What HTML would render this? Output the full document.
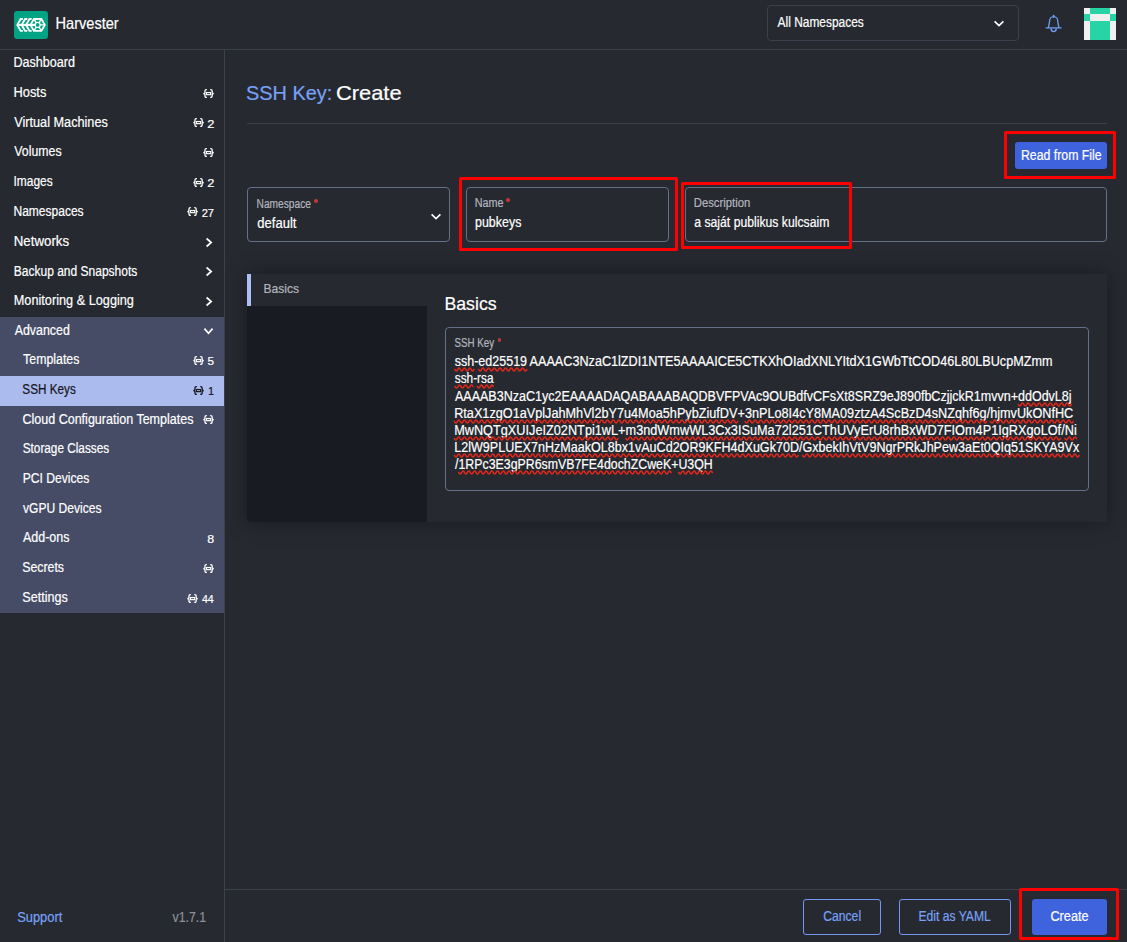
<!DOCTYPE html>
<html lang="en">
<head>
<meta charset="utf-8">
<title>Harvester - SSH Key: Create</title>
<style>
*{box-sizing:border-box;margin:0;padding:0}
html,body{width:1127px;height:942px;overflow:hidden;background:#262930;}
body{font-family:"Liberation Sans",sans-serif;font-size:14px;color:#fff;position:relative;-webkit-font-smoothing:antialiased}
.abs{position:absolute}
.t{position:absolute;white-space:nowrap;line-height:1;transform-origin:0 50%;-webkit-text-stroke:0.2px}
/* header */
#hdr{position:absolute;left:0;top:0;width:1127px;height:50px;border-bottom:1px solid #3c404a;background:#262930}
#logo{position:absolute;left:14px;top:11px;width:34px;height:28px}
#nssel{position:absolute;left:767px;top:5px;width:252px;height:36px;border:1px solid #3b404c;border-radius:4px}
#avatar{position:absolute;left:1084px;top:8px;width:32px;height:32px}
/* sidebar */
#side{position:absolute;left:0;top:50px;width:225px;height:892px;border-right:1px solid #3c404a}
#grp{position:absolute;left:0;top:317px;width:224px;height:296px;background:#464c66}
#act{position:absolute;left:0;top:376px;width:224px;height:30px;background:#abbbee}
.nv{font-size:14px}
.ct{font-size:11.5px}
/* main */
.field{position:absolute;border:1px solid #647088;border-radius:4px;background:#262930}
.lbl{font-size:12px;color:#b4b6bf}
.ast{position:absolute;width:3.6px;height:3.4px;border-radius:50%;background:#bb3a36}
.red{position:absolute;border:3px solid #ff0000;border-radius:1.5px}
.btn{position:absolute;border-radius:3px;font-size:14px}
.hr{position:absolute;height:1px;background:#3c404a}
.k{left:454px;font-size:14px;color:#fff}
.k u{text-decoration:none}
</style>
</head>
<body>

<!-- ===== HEADER ===== -->
<div id="hdr">
  <svg id="logo" viewBox="0 0 34 28">
    <rect x="0" y="0" width="34" height="28" rx="3.2" fill="#00a383"/>
    <g fill="none" stroke="#fff" stroke-width="1.9" stroke-linejoin="miter" stroke-miterlimit="6">
      <path d="M8.9 7.95 H6.7 L3.3 13.9 L6.7 19.85 H8.9"/>
      <path d="M13.3 7.95 H11.1 L7.7 13.9 L11.1 19.85 H13.3"/>
      <path d="M17.7 7.95 H15.5 L12.1 13.9 L15.5 19.85 H17.7"/>
      <path d="M19.9 7.95 H27.4 L30.8 13.9 L27.4 19.85 H19.9 L16.5 13.9 Z"/>
      <path d="M3 13.9 H21" stroke-width="2.1"/>
    </g>
    <g fill="none" stroke="#fff" stroke-width="1.4">
      <path d="M19.9 8 L27.4 19.8 M27.4 8 L19.9 19.8 M16.5 13.9 H30.8"/>
    </g>
    <circle cx="23.65" cy="13.9" r="3.1" fill="#fff"/>
    <circle cx="23.65" cy="13.9" r="1.85" fill="#00a383"/>
  </svg>
  <span class="t" id="t-harv" style="left:55px;top:15px;font-size:16.5px;transform:translateX(0.49px) scaleX(0.8836)">Harvester</span>

  <div id="nssel"></div>
  <span class="t" id="t-allns" style="left:777px;top:15px;font-size:14px;transform:translateX(0.59px) scaleX(0.8520)">All Namespaces</span>
  <svg class="abs" style="left:992.6px;top:19.2px" width="12" height="9" viewBox="0 0 12 9"><path d="M1.6 2.4 L6 6.5 L10.4 2.4" fill="none" stroke="#fff" stroke-width="1.7"/></svg>

  <svg class="abs" style="left:1044px;top:14px" width="20" height="20" viewBox="0 0 20 20">
    <path d="M2.2 13.95 H17.1" fill="none" stroke="#6e9df3" stroke-width="1.3" stroke-linecap="round"/>
    <path d="M4.5 13.8 C4.5 11.4 5.5 9.6 5.5 7.2 A4.15 4.6 0 0 1 13.8 7.2 C13.8 9.6 14.8 11.4 14.8 13.8" fill="none" stroke="#6e9df3" stroke-width="1.3"/>
    <path d="M7 14.2 A2.65 3.4 0 0 0 12.3 14.2" fill="none" stroke="#6e9df3" stroke-width="1.3"/>
    <path d="M9.65 1.5 V3" stroke="#6e9df3" stroke-width="1.7" stroke-linecap="round"/>
  </svg>

  <svg id="avatar" viewBox="0 0 5 5" shape-rendering="crispEdges">
    <rect width="5" height="5" fill="#f0f0f0"/>
    <rect x="1" y="0" width="3" height="1" fill="#26d4a5"/>
    <rect x="0" y="1" width="1" height="1" fill="#26d4a5"/>
    <rect x="4" y="1" width="1" height="1" fill="#26d4a5"/>
    <rect x="1" y="2" width="3" height="3" fill="#26d4a5"/>
  </svg>
</div>

<!-- ===== SIDEBAR ===== -->
<svg width="0" height="0" style="position:absolute">
  <defs>
    <g id="nsico" fill="none" stroke="currentColor">
      <path d="M3.9 0.65 H3.3 Q1.95 0.65 1.95 2 V3.6 Q1.95 4.55 0.3 4.55 Q1.95 4.55 1.95 5.5 V7.1 Q1.95 8.45 3.3 8.45 H3.9" stroke-width="1.3"/>
      <path d="M7.2 0.65 H7.8 Q9.15 0.65 9.15 2 V3.6 Q9.15 4.55 10.8 4.55 Q9.15 4.55 9.15 5.5 V7.1 Q9.15 8.45 7.8 8.45 H7.2" stroke-width="1.3"/>
      <rect x="3.4" y="3.55" width="4.3" height="2.1" stroke-width="1.2"/>
    </g>
  </defs>
</svg>
<div id="side"></div>
<div id="grp"></div>
<div id="act"></div>
<!--NAV-->
<span class="t nv" id="n0" style="left:13px;top:55px;color:#fff;transform:translateX(0.47px) scaleX(0.8989)">Dashboard</span>
<span class="t nv" id="n1" style="left:13px;top:85px;color:#fff;transform:translateX(0.44px) scaleX(0.9189)">Hosts</span>
<svg class="abs ic" style="left:203.2px;top:88.9px;color:#fff" width="11.1" height="9.1" viewBox="0 0 11.1 9.1"><use href="#nsico"/></svg>
<span class="t nv" id="n2" style="left:14px;top:115px;color:#fff;transform:translateX(0.26px) scaleX(0.9061)">Virtual Machines</span>
<span class="t ct" id="c2" style="left:207px;top:119px;color:#fff;transform:translateX(0.37px) scaleX(1.1176)">2</span>
<svg class="abs ic" style="left:193.2px;top:117.9px;color:#fff" width="11.1" height="9.1" viewBox="0 0 11.1 9.1"><use href="#nsico"/></svg>
<span class="t nv" id="n3" style="left:14px;top:144px;color:#fff;transform:translateX(0.28px) scaleX(0.8808)">Volumes</span>
<svg class="abs ic" style="left:203.2px;top:147.9px;color:#fff" width="11.1" height="9.1" viewBox="0 0 11.1 9.1"><use href="#nsico"/></svg>
<span class="t nv" id="n4" style="left:13px;top:174px;color:#fff;transform:translateX(0.47px) scaleX(0.8532)">Images</span>
<span class="t ct" id="c4" style="left:207px;top:178px;color:#fff;transform:translateX(0.37px) scaleX(1.1176)">2</span>
<svg class="abs ic" style="left:193.2px;top:177.9px;color:#fff" width="11.1" height="9.1" viewBox="0 0 11.1 9.1"><use href="#nsico"/></svg>
<span class="t nv" id="n5" style="left:13px;top:204px;color:#fff;transform:translateX(0.48px) scaleX(0.8586)">Namespaces</span>
<span class="t ct" id="c5" style="left:201px;top:208px;color:#fff;transform:translateX(0.65px) scaleX(0.9691)">27</span>
<svg class="abs ic" style="left:187.4px;top:206.9px;color:#fff" width="11.1" height="9.1" viewBox="0 0 11.1 9.1"><use href="#nsico"/></svg>
<span class="t nv" id="n6" style="left:13px;top:234px;color:#fff;transform:translateX(0.76px) scaleX(0.9486)">Networks</span>
<svg class="abs" style="left:204.7px;top:237.0px" width="8" height="11" viewBox="0 0 8 11"><path d="M1.6 1.5 L6.2 5.5 L1.6 9.5" fill="none" stroke="#fff" stroke-width="1.7"/></svg>
<span class="t nv" id="n7" style="left:13px;top:264px;color:#fff;transform:translateX(0.80px) scaleX(0.8573)">Backup and Snapshots</span>
<svg class="abs" style="left:204.7px;top:266.2px" width="8" height="11" viewBox="0 0 8 11"><path d="M1.6 1.5 L6.2 5.5 L1.6 9.5" fill="none" stroke="#fff" stroke-width="1.7"/></svg>
<span class="t nv" id="n8" style="left:13px;top:293px;color:#fff;transform:translateX(0.73px) scaleX(0.9086)">Monitoring &amp; Logging</span>
<svg class="abs" style="left:204.7px;top:295.8px" width="8" height="11" viewBox="0 0 8 11"><path d="M1.6 1.5 L6.2 5.5 L1.6 9.5" fill="none" stroke="#fff" stroke-width="1.7"/></svg>
<span class="t nv" id="n9" style="left:14px;top:323px;color:#fff;transform:translateX(0.69px) scaleX(0.8856)">Advanced</span>
<svg class="abs" style="left:203.3px;top:327.2px" width="11" height="8" viewBox="0 0 11 8"><path d="M1.4 1.6 L5.5 6.2 L9.6 1.6" fill="none" stroke="#fff" stroke-width="1.7"/></svg>
<span class="t nv" id="n10" style="left:23px;top:352px;color:#fff;transform:translateX(0.09px) scaleX(0.8824)">Templates</span>
<span class="t ct" id="c10" style="left:207px;top:356px;color:#fff;transform:translateX(0.57px) scaleX(1.0200)">5</span>
<svg class="abs ic" style="left:193.3px;top:355.9px;color:#fff" width="11.1" height="9.1" viewBox="0 0 11.1 9.1"><use href="#nsico"/></svg>
<span class="t nv" id="n11" style="left:22px;top:382px;color:#141419;transform:translateX(0.33px) scaleX(0.8372)">SSH Keys</span>
<span class="t ct" id="c11" style="left:208px;top:386px;color:#141419;transform:translateX(0.12px) scaleX(0.9477)">1</span>
<svg class="abs ic" style="left:193.3px;top:385.9px;color:#141419" width="11.1" height="9.1" viewBox="0 0 11.1 9.1"><use href="#nsico"/></svg>
<span class="t nv" id="n12" style="left:22px;top:412px;color:#fff;transform:translateX(0.45px) scaleX(0.8945)">Cloud Configuration Templates</span>
<svg class="abs ic" style="left:203.2px;top:414.9px;color:#fff" width="11.1" height="9.1" viewBox="0 0 11.1 9.1"><use href="#nsico"/></svg>
<span class="t nv" id="n13" style="left:22px;top:441px;color:#fff;transform:translateX(0.74px) scaleX(0.8408)">Storage Classes</span>
<span class="t nv" id="n14" style="left:22px;top:471px;color:#fff;transform:translateX(0.65px) scaleX(0.8665)">PCI Devices</span>
<span class="t nv" id="n15" style="left:23px;top:501px;color:#fff;transform:translateX(0.00px) scaleX(0.8616)">vGPU Devices</span>
<span class="t nv" id="n16" style="left:22px;top:530px;color:#fff;transform:translateX(0.95px) scaleX(0.8908)">Add-ons</span>
<span class="t ct" id="c16" style="left:207px;top:534px;color:#fff;transform:translateX(0.32px) scaleX(1.0816)">8</span>
<span class="t nv" id="n17" style="left:22px;top:560px;color:#fff;transform:translateX(0.32px) scaleX(0.8786)">Secrets</span>
<svg class="abs ic" style="left:203.2px;top:563.9px;color:#fff" width="11.1" height="9.1" viewBox="0 0 11.1 9.1"><use href="#nsico"/></svg>
<span class="t nv" id="n18" style="left:22px;top:590px;color:#fff;transform:translateX(0.32px) scaleX(0.8989)">Settings</span>
<span class="t ct" id="c18" style="left:201px;top:594px;color:#fff;transform:translateX(0.97px) scaleX(0.9208)">44</span>
<svg class="abs ic" style="left:187.2px;top:593.9px;color:#fff" width="11.1" height="9.1" viewBox="0 0 11.1 9.1"><use href="#nsico"/></svg>
<!--/NAV-->
<span class="t" id="t-support" style="left:17px;top:910px;font-size:14px;color:#78a1f6;transform:translateX(0.21px) scaleX(0.9197)">Support</span>
<span class="t" id="t-ver" style="left:172px;top:910px;font-size:14px;color:#8d9099;transform:translateX(0.58px) scaleX(0.8790)">v1.7.1</span>

<!-- ===== MAIN ===== -->
<span class="t" id="t-title1" style="left:245px;top:82px;font-size:21px;color:#78a1f6;transform:translateX(0.92px) scaleX(0.9484)">SSH Key:</span>
<span class="t" id="t-title2" style="left:335px;top:82px;font-size:21px;color:#fff;transform:translateX(0.91px) scaleX(1.0425)">Create</span>
<div class="hr" style="left:247px;top:123px;width:860px"></div>

<div class="btn" id="b-read" style="left:1015px;top:142px;width:92px;height:27px;background:#3e63dd"></div>
<span class="t" id="t-read" style="left:1020px;top:148px;font-size:14px;color:#fff;transform:translateX(0.91px) scaleX(0.8795)">Read from File</span>
<div class="red" style="left:1004px;top:131px;width:112px;height:48px"></div>

<div class="field" style="left:247px;top:187px;width:203px;height:55px"></div>
<span class="t lbl" id="t-l-ns" style="left:256px;top:198px;transform:translateX(0.57px) scaleX(0.8486)">Namespace</span>
<span class="t" id="t-v-ns" style="left:257px;top:216px;transform:translateX(0.35px) scaleX(0.9289)">default</span>
<svg class="abs" style="left:430.1px;top:212.2px" width="12" height="9" viewBox="0 0 12 9"><path d="M1.6 2.4 L6 6.5 L10.4 2.4" fill="none" stroke="#fff" stroke-width="1.7"/></svg>

<div class="field" style="left:466px;top:187px;width:203px;height:55px"></div>
<span class="t lbl" id="t-l-name" style="left:474px;top:197px;transform:translateX(0.82px) scaleX(0.8980)">Name</span>
<span class="t" id="t-v-name" style="left:475px;top:215px;transform:translateX(0.04px) scaleX(0.8881)">pubkeys</span>
<div class="red" style="left:459px;top:177px;width:219px;height:74px"></div>

<div class="field" style="left:685px;top:187px;width:422px;height:55px"></div>
<span class="t lbl" id="t-l-desc" style="left:693px;top:197px;transform:translateX(0.83px) scaleX(0.9390)">Description</span>
<span class="t" id="t-v-desc" style="left:694px;top:215px;transform:translateX(0.29px) scaleX(0.8722)">a saját publikus kulcsaim</span>
<div class="red" style="left:681px;top:182px;width:171px;height:67px"></div>

<!-- tabbed block -->
<div class="abs" id="tabblk" style="left:247px;top:274px;width:860px;height:248px;background:#262930;box-shadow:0 0 20px rgba(0,0,0,.35)"></div>
<div class="abs" id="tabnav" style="left:247px;top:306px;width:180px;height:216px;background:#181b22;border-bottom-left-radius:4px"></div>
<div class="abs" id="tabbar" style="left:247px;top:274px;width:4px;height:32px;background:#aebff3"></div>
<span class="t" id="t-tab" style="left:263px;top:282px;font-size:13px;color:#b4b6bf;transform:translateX(0.52px) scaleX(0.9255)">Basics</span>
<span class="t" id="t-h2" style="left:444px;top:294px;font-size:19px;color:#fff;transform:translateX(0.45px) scaleX(0.9322)">Basics</span>

<div class="field" style="left:445px;top:327px;width:644px;height:164px"></div>
<span class="t lbl" id="t-l-ssh" style="left:454px;top:337px;transform:translateX(0.39px) scaleX(0.8153)">SSH Key</span>
<div id="ta">
<span class="t k" id="k1" style="left:454px;top:354px;transform:translateX(0.70px) scaleX(0.8937)"><u>ssh</u>-<u>ed25519</u></span>
<span class="t k" id="k1b" style="left:529px;top:354px;transform:translateX(0.57px) scaleX(0.9026)">AAAAC3NzaC1lZDI1NTE5AAAAICE5CTKXhOIadXNLYItdX1GWbTtCOD46L80LBUcpMZmm</span>
<span class="t k" id="k2" style="left:454px;top:371px;transform:translateX(0.75px) scaleX(0.8442)"><u>ssh</u>-<u>rsa</u></span>
<span class="t k" id="k3" style="left:454px;top:389px;transform:translateX(0.94px) scaleX(0.8943)">AAAAB3NzaC1yc2EAAAADAQABAAABAQDBVFPVAc9OUBdfvCFsXt8SRZ9eJ890fbCzjjckR1mvvn+<u>ddOdvL8j</u></span>
<span class="t k" id="k4" style="left:454px;top:406px;transform:translateX(0.16px) scaleX(0.9056)"><u>RtaX1zgO1aVplJahMhVl2bY7u4Moa5hPybZiufDV</u>+<u>3nPLo8I4cY8MA09ztzA4ScBzD4sNZqhf6g</u>/<u>hjmvUkONfHC</u></span>
<span class="t k" id="k5" style="left:454px;top:423px;transform:translateX(0.15px) scaleX(0.9084)"><u>MwNQTgXUIJeIZ02NTpi1wL</u>+<u>m3ndWmwWL3Cx3ISuMa72l251CThUVyErU8rhBxWD7FIOm4P1IgRXgoLOf</u>/<u>Ni</u></span>
<span class="t k" id="k6" style="left:454px;top:440px;transform:translateX(0.21px) scaleX(0.8968)"><u>L2lW9PLUEX7nHzMaakOL8bx1vAuCd2OR9KFH4dXuGk70D</u>/<u>GxbekIhVtV9NgrPRkJhPew3aEt0QIq51SKYA9Vx</u></span>
<span class="t k" id="k7" style="left:455px;top:457px;transform:translateX(0.05px) scaleX(0.8817)">/<u>1RPc3E3gPR6smVB7FE4dochZCweK</u>+<u>U3QH</u></span>
</div>


<div class="ast" style="left:314.2px;top:199.2px"></div>
<div class="ast" style="left:506.4px;top:198.2px"></div>
<div class="ast" style="left:497.5px;top:338.2px"></div>
<!--SQ--><svg class="abs" id="squig" style="left:0;top:0" width="1127" height="942" viewBox="0 0 1127 942"><path fill="none" stroke="#e6281a" stroke-width="1.6" stroke-linecap="round" d="M455.0 369.5q1.35 3.10 2.70 0t2.70 0t2.70 0t2.70 0t2.70 0t2.70 0t2.70 0M478.7 369.5q1.42 3.10 2.83 0t2.83 0t2.83 0t2.83 0t2.83 0t2.83 0t2.83 0t2.83 0t2.83 0t2.83 0t2.83 0t2.83 0t2.83 0t2.83 0t2.83 0t2.83 0t2.83 0M455.1 386.5q1.48 3.10 2.97 0t2.97 0t2.97 0t2.97 0t2.97 0t2.97 0M477.4 386.5q1.32 3.10 2.64 0t2.64 0t2.64 0t2.64 0t2.64 0t2.64 0M1018.3 404.5q1.39 3.10 2.79 0t2.79 0t2.79 0t2.79 0t2.79 0t2.79 0t2.79 0t2.79 0t2.79 0t2.79 0t2.79 0t2.79 0t2.79 0t2.79 0t2.79 0t2.79 0t2.79 0t2.79 0t2.79 0M454.5 421.5q1.43 3.10 2.86 0t2.86 0t2.86 0t2.86 0t2.86 0t2.86 0t2.86 0t2.86 0t2.86 0t2.86 0t2.86 0t2.86 0t2.86 0t2.86 0t2.86 0t2.86 0t2.86 0t2.86 0t2.86 0t2.86 0t2.86 0t2.86 0t2.86 0t2.86 0t2.86 0t2.86 0t2.86 0t2.86 0t2.86 0t2.86 0t2.86 0t2.86 0t2.86 0t2.86 0t2.86 0t2.86 0t2.86 0t2.86 0t2.86 0t2.86 0t2.86 0t2.86 0t2.86 0t2.86 0t2.86 0t2.86 0t2.86 0t2.86 0t2.86 0t2.86 0t2.86 0t2.86 0t2.86 0t2.86 0t2.86 0t2.86 0t2.86 0t2.86 0t2.86 0t2.86 0t2.86 0t2.86 0t2.86 0t2.86 0t2.86 0t2.86 0t2.86 0t2.86 0t2.86 0t2.86 0t2.86 0t2.86 0t2.86 0t2.86 0t2.86 0t2.86 0t2.86 0t2.86 0t2.86 0t2.86 0t2.86 0t2.86 0t2.86 0t2.86 0t2.86 0t2.86 0t2.86 0t2.86 0t2.86 0t2.86 0t2.86 0t2.86 0t2.86 0t2.86 0t2.86 0t2.86 0t2.86 0t2.86 0t2.86 0M745.2 421.5q1.42 3.10 2.84 0t2.84 0t2.84 0t2.84 0t2.84 0t2.84 0t2.84 0t2.84 0t2.84 0t2.84 0t2.84 0t2.84 0t2.84 0t2.84 0t2.84 0t2.84 0t2.84 0t2.84 0t2.84 0t2.84 0t2.84 0t2.84 0t2.84 0t2.84 0t2.84 0t2.84 0t2.84 0t2.84 0t2.84 0t2.84 0t2.84 0t2.84 0t2.84 0t2.84 0t2.84 0t2.84 0t2.84 0t2.84 0t2.84 0t2.84 0t2.84 0t2.84 0t2.84 0t2.84 0t2.84 0t2.84 0t2.84 0t2.84 0t2.84 0t2.84 0t2.84 0t2.84 0t2.84 0t2.84 0t2.84 0t2.84 0t2.84 0t2.84 0t2.84 0t2.84 0t2.84 0t2.84 0t2.84 0t2.84 0t2.84 0t2.84 0t2.84 0t2.84 0t2.84 0t2.84 0t2.84 0t2.84 0t2.84 0t2.84 0t2.84 0t2.84 0t2.84 0t2.84 0t2.84 0t2.84 0t2.84 0t2.84 0t2.84 0t2.84 0t2.84 0M990.5 421.5q1.42 3.10 2.85 0t2.85 0t2.85 0t2.85 0t2.85 0t2.85 0t2.85 0t2.85 0t2.85 0t2.85 0t2.85 0t2.85 0t2.85 0t2.85 0t2.85 0t2.85 0t2.85 0t2.85 0t2.85 0t2.85 0t2.85 0t2.85 0t2.85 0t2.85 0t2.85 0t2.85 0t2.85 0t2.85 0t2.85 0M454.4 438.5q1.43 3.10 2.87 0t2.87 0t2.87 0t2.87 0t2.87 0t2.87 0t2.87 0t2.87 0t2.87 0t2.87 0t2.87 0t2.87 0t2.87 0t2.87 0t2.87 0t2.87 0t2.87 0t2.87 0t2.87 0t2.87 0t2.87 0t2.87 0t2.87 0t2.87 0t2.87 0t2.87 0t2.87 0t2.87 0t2.87 0t2.87 0t2.87 0t2.87 0t2.87 0t2.87 0t2.87 0t2.87 0t2.87 0t2.87 0t2.87 0t2.87 0t2.87 0t2.87 0t2.87 0t2.87 0t2.87 0t2.87 0t2.87 0t2.87 0t2.87 0t2.87 0t2.87 0t2.87 0t2.87 0t2.87 0t2.87 0t2.87 0t2.87 0M625.9 438.5q1.42 3.10 2.84 0t2.84 0t2.84 0t2.84 0t2.84 0t2.84 0t2.84 0t2.84 0t2.84 0t2.84 0t2.84 0t2.84 0t2.84 0t2.84 0t2.84 0t2.84 0t2.84 0t2.84 0t2.84 0t2.84 0t2.84 0t2.84 0t2.84 0t2.84 0t2.84 0t2.84 0t2.84 0t2.84 0t2.84 0t2.84 0t2.84 0t2.84 0t2.84 0t2.84 0t2.84 0t2.84 0t2.84 0t2.84 0t2.84 0t2.84 0t2.84 0t2.84 0t2.84 0t2.84 0t2.84 0t2.84 0t2.84 0t2.84 0t2.84 0t2.84 0t2.84 0t2.84 0t2.84 0t2.84 0t2.84 0t2.84 0t2.84 0t2.84 0t2.84 0t2.84 0t2.84 0t2.84 0t2.84 0t2.84 0t2.84 0t2.84 0t2.84 0t2.84 0t2.84 0t2.84 0t2.84 0t2.84 0t2.84 0t2.84 0t2.84 0t2.84 0t2.84 0t2.84 0t2.84 0t2.84 0t2.84 0t2.84 0t2.84 0t2.84 0t2.84 0t2.84 0t2.84 0t2.84 0t2.84 0t2.84 0t2.84 0t2.84 0t2.84 0t2.84 0t2.84 0t2.84 0t2.84 0t2.84 0t2.84 0t2.84 0t2.84 0t2.84 0t2.84 0t2.84 0t2.84 0t2.84 0t2.84 0t2.84 0t2.84 0t2.84 0t2.84 0t2.84 0t2.84 0t2.84 0t2.84 0t2.84 0t2.84 0t2.84 0t2.84 0t2.84 0t2.84 0t2.84 0t2.84 0t2.84 0t2.84 0t2.84 0t2.84 0t2.84 0t2.84 0t2.84 0t2.84 0t2.84 0t2.84 0t2.84 0t2.84 0t2.84 0t2.84 0t2.84 0t2.84 0t2.84 0t2.84 0t2.84 0t2.84 0t2.84 0t2.84 0t2.84 0t2.84 0t2.84 0t2.84 0t2.84 0t2.84 0t2.84 0t2.84 0M1065.0 438.5q1.43 3.10 2.86 0t2.86 0t2.86 0t2.86 0M454.5 455.5q1.42 3.10 2.84 0t2.84 0t2.84 0t2.84 0t2.84 0t2.84 0t2.84 0t2.84 0t2.84 0t2.84 0t2.84 0t2.84 0t2.84 0t2.84 0t2.84 0t2.84 0t2.84 0t2.84 0t2.84 0t2.84 0t2.84 0t2.84 0t2.84 0t2.84 0t2.84 0t2.84 0t2.84 0t2.84 0t2.84 0t2.84 0t2.84 0t2.84 0t2.84 0t2.84 0t2.84 0t2.84 0t2.84 0t2.84 0t2.84 0t2.84 0t2.84 0t2.84 0t2.84 0t2.84 0t2.84 0t2.84 0t2.84 0t2.84 0t2.84 0t2.84 0t2.84 0t2.84 0t2.84 0t2.84 0t2.84 0t2.84 0t2.84 0t2.84 0t2.84 0t2.84 0t2.84 0t2.84 0t2.84 0t2.84 0t2.84 0t2.84 0t2.84 0t2.84 0t2.84 0t2.84 0t2.84 0t2.84 0t2.84 0t2.84 0t2.84 0t2.84 0t2.84 0t2.84 0t2.84 0t2.84 0t2.84 0t2.84 0t2.84 0t2.84 0t2.84 0t2.84 0t2.84 0t2.84 0t2.84 0t2.84 0t2.84 0t2.84 0t2.84 0t2.84 0t2.84 0t2.84 0t2.84 0t2.84 0t2.84 0t2.84 0t2.84 0t2.84 0t2.84 0t2.84 0t2.84 0t2.84 0t2.84 0t2.84 0t2.84 0t2.84 0t2.84 0t2.84 0t2.84 0t2.84 0t2.84 0t2.84 0t2.84 0t2.84 0t2.84 0t2.84 0t2.84 0M802.7 455.5q1.42 3.10 2.85 0t2.85 0t2.85 0t2.85 0t2.85 0t2.85 0t2.85 0t2.85 0t2.85 0t2.85 0t2.85 0t2.85 0t2.85 0t2.85 0t2.85 0t2.85 0t2.85 0t2.85 0t2.85 0t2.85 0t2.85 0t2.85 0t2.85 0t2.85 0t2.85 0t2.85 0t2.85 0t2.85 0t2.85 0t2.85 0t2.85 0t2.85 0t2.85 0t2.85 0t2.85 0t2.85 0t2.85 0t2.85 0t2.85 0t2.85 0t2.85 0t2.85 0t2.85 0t2.85 0t2.85 0t2.85 0t2.85 0t2.85 0t2.85 0t2.85 0t2.85 0t2.85 0t2.85 0t2.85 0t2.85 0t2.85 0t2.85 0t2.85 0t2.85 0t2.85 0t2.85 0t2.85 0t2.85 0t2.85 0t2.85 0t2.85 0t2.85 0t2.85 0t2.85 0t2.85 0t2.85 0t2.85 0t2.85 0t2.85 0t2.85 0t2.85 0t2.85 0t2.85 0t2.85 0t2.85 0t2.85 0t2.85 0t2.85 0t2.85 0t2.85 0t2.85 0t2.85 0t2.85 0t2.85 0t2.85 0t2.85 0t2.85 0t2.85 0t2.85 0t2.85 0t2.85 0t2.85 0M458.8 472.5q1.43 3.10 2.87 0t2.87 0t2.87 0t2.87 0t2.87 0t2.87 0t2.87 0t2.87 0t2.87 0t2.87 0t2.87 0t2.87 0t2.87 0t2.87 0t2.87 0t2.87 0t2.87 0t2.87 0t2.87 0t2.87 0t2.87 0t2.87 0t2.87 0t2.87 0t2.87 0t2.87 0t2.87 0t2.87 0t2.87 0t2.87 0t2.87 0t2.87 0t2.87 0t2.87 0t2.87 0t2.87 0t2.87 0t2.87 0t2.87 0t2.87 0t2.87 0t2.87 0t2.87 0t2.87 0t2.87 0t2.87 0t2.87 0t2.87 0t2.87 0t2.87 0t2.87 0t2.87 0t2.87 0t2.87 0t2.87 0t2.87 0t2.87 0t2.87 0t2.87 0t2.87 0t2.87 0t2.87 0t2.87 0t2.87 0t2.87 0t2.87 0t2.87 0t2.87 0t2.87 0t2.87 0t2.87 0t2.87 0t2.87 0t2.87 0M678.7 472.5q1.40 3.10 2.81 0t2.81 0t2.81 0t2.81 0t2.81 0t2.81 0t2.81 0t2.81 0t2.81 0t2.81 0t2.81 0t2.81 0"/></svg><!--/SQ-->
<!-- footer -->
<div class="hr" style="left:225px;top:889px;width:902px"></div>
<div class="btn" style="left:803px;top:899px;width:78px;height:36px;border:1px solid #7397f0"></div>
<span class="t" id="t-cancel" style="left:823px;top:909px;color:#78a1f6;transform:translateX(0.14px) scaleX(0.8712)">Cancel</span>
<div class="btn" style="left:899px;top:899px;width:112px;height:36px;border:1px solid #7397f0"></div>
<span class="t" id="t-yaml" style="left:918px;top:909px;color:#78a1f6;transform:translateX(0.46px) scaleX(0.8656)">Edit as YAML</span>
<div class="btn" style="left:1032px;top:899px;width:75px;height:36px;background:#3e63dd"></div>
<span class="t" id="t-create" style="left:1050px;top:909px;color:#fff;transform:translateX(0.42px) scaleX(0.9079)">Create</span>
<div class="red" style="left:1019px;top:888px;width:100px;height:52px"></div>

</body>
</html>
